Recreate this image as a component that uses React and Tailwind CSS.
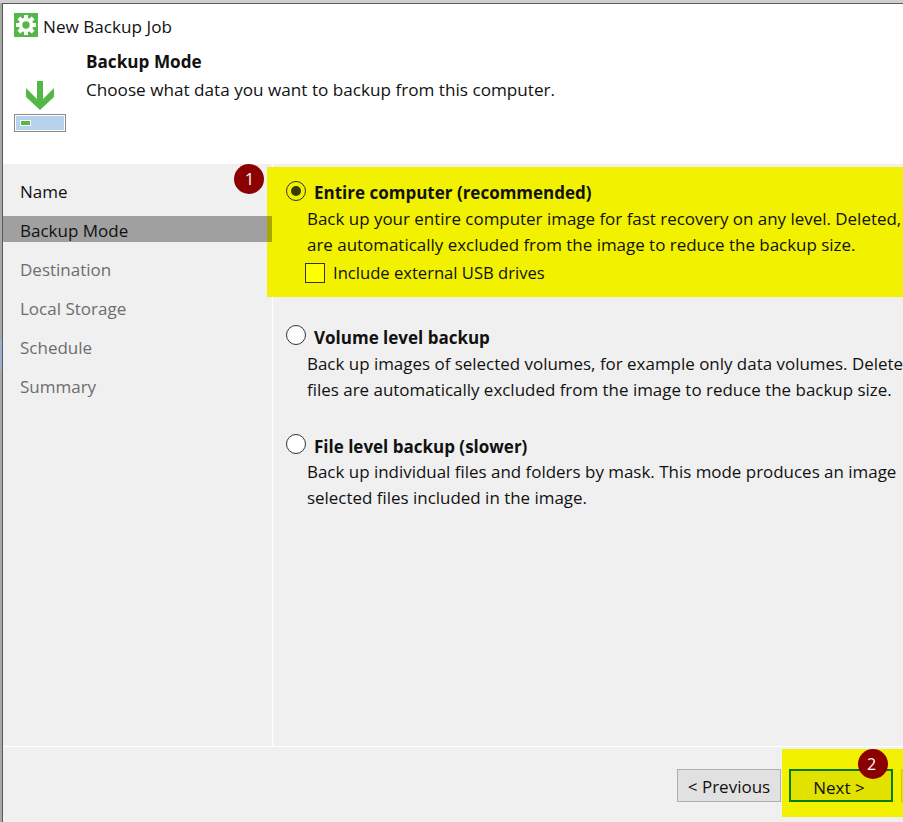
const steps = [
  { label: "Name", color: "text-[#111]" },
  { label: "Backup Mode", color: "text-[#111]", active: true },
  { label: "Destination", color: "text-[#6d6d6d]" },
  { label: "Local Storage", color: "text-[#6d6d6d]" },
  { label: "Schedule", color: "text-[#6d6d6d]" },
  { label: "Summary", color: "text-[#6d6d6d]" },
];

const modes = [
  {
    title: "Volume level backup",
    lines: [
      "Back up images of selected volumes, for example only data volumes. Deleted",
      "files are automatically excluded from the image to reduce the backup size.",
    ],
  },
  {
    title: "File level backup (slower)",
    lines: [
      "Back up individual files and folders by mask. This mode produces an image",
      "selected files included in the image.",
    ],
  },
];

const teeth = [0, 45, 90, 135, 180, 225, 270, 315];

function GearIcon() {
  return (
    <svg width="24" height="24" viewBox="0 0 24 24" className="shrink-0">
      <rect width="24" height="24" fill="#53b848" />
      <circle cx="12" cy="12" r="5.5" fill="none" stroke="#fff" strokeWidth="3.600" />
      {teeth.map((deg) => (
        <rect key={deg} x="10" y="2" width="4" height="4" fill="#fff" transform={`rotate(${deg} 12 12)`} />
      ))}
    </svg>
  );
}

function ModeIcon() {
  return (
    <svg width="52" height="51" viewBox="0 0 52 51" className="shrink-0">
      <path fill="#53b848" d="M23 0h6v18l11-11v9L26 29 12 16V7l11 11z" />
      <rect x="0.500" y="33.500" width="51" height="17" fill="#b9d2ec" stroke="#8a8a8a" />
      <rect x="1.500" y="34.500" width="49" height="15" fill="none" stroke="#fff" />
      <rect x="6.500" y="39.500" width="10" height="5" fill="#53b848" stroke="#fff" />
    </svg>
  );
}

function Radio({ checked }) {
  return (
    <span
      className={`mb-1 flex h-5 w-5 shrink-0 items-center justify-center rounded-full border border-[#333] ${checked ? "" : "bg-white"}`}
    >
      {checked && <span className="h-[10px] w-[10px] rounded-full bg-[#3a3a08]" />}
    </span>
  );
}

export default function App() {
  return (
    <div className="relative flex h-[822px] w-[903px] flex-col overflow-hidden bg-[#cfcfcf] font-['Open_Sans',sans-serif] text-[17px] text-[#111]">
      <div className="h-[3px] shrink-0" />
      <div className="flex h-[819px]">
        {/* window behind the dialog */}
        <div className="w-[2px] shrink-0 bg-[#a8a8a8] pt-[337px]">
          <div className="h-[30px] bg-[#9db0d0]" />
        </div>

        <div className="flex min-w-0 flex-1 flex-col border-l border-t border-[#5a5a5a] bg-[#f0f0f0]">
          {/* header */}
          <div className="h-[160px] shrink-0 bg-white pl-[11px] pt-[9px] text-[17.150px]">
            <div className="flex items-start gap-[5px]">
              <GearIcon />
              <span className="mt-[2px] leading-6">New Backup Job</span>
            </div>
            <div className="mt-[11px] flex gap-5">
              <div className="pt-[31px]">
                <ModeIcon />
              </div>
              <div>
                <div className="font-bold leading-6">Backup Mode</div>
                <div className="mt-[4px] leading-6">Choose what data you want to backup from this computer.</div>
              </div>
            </div>
          </div>

          {/* body */}
          <div className="relative flex h-[582px] shrink-0">
            <div className="absolute left-[264px] top-[3px] h-[130px] w-[636px] bg-[#f2f200]" />
            <div className="relative w-[269px] shrink-0 pt-[13px]">
              {steps.map((step) => (
                <div
                  key={step.label}
                  className={`relative mb-[13px] h-[26px] pl-[17px] leading-[30px] ${step.color} ${step.active ? "bg-[#a0a0a0]" : ""}`}
                >
                  {step.label}
                  {step.active && <span className="absolute bottom-0 right-0 top-0 w-[5px] bg-[#a8a400]" />}
                </div>
              ))}
            </div>
            <div className="w-[1px] bg-white" />
            <div className="relative min-w-0 flex-1 overflow-hidden whitespace-nowrap pl-[13px] pt-[16px]">
              <div className="flex items-center gap-[8px] font-bold">
                <Radio checked />
                <span className="py-[1px] leading-6">Entire computer (recommended)</span>
              </div>
              <div className="ml-[21px] text-[16.950px] leading-[26px]">
                <div>Back up your entire computer image for fast recovery on any level. Deleted,</div>
                <div>are automatically excluded from the image to reduce the backup size.</div>
              </div>
              <div className="ml-[19px] mt-[3px] flex items-center gap-2 text-[16.600px] leading-6">
                <span className="h-5 w-5 shrink-0 border border-[#333] bg-[#ffff00]" />
                <span>Include external USB drives</span>
              </div>
              {modes.map((mode, i) => (
                <div key={mode.title} className={i === 0 ? "mt-[39px]" : "mt-[30px]"}>
                  <div className="flex items-center gap-[8px] font-bold">
                    <Radio />
                    <span className="pt-[2px] leading-6">{mode.title}</span>
                  </div>
                  <div className={`ml-[21px] text-[16.950px] leading-[26px] ${i === 0 ? "mt-[1px]" : ""}`}>
                    {mode.lines.map((line) => (
                      <div key={line}>{line}</div>
                    ))}
                  </div>
                </div>
              ))}
            </div>
          </div>

          {/* footer */}
          <div className="relative flex flex-1 items-start overflow-hidden border-t border-white pl-[674px] pt-[22px]">
            <div className="absolute left-[779px] top-[2px] h-[68px] w-[121px] bg-[#f2f200]" />
            <button className="relative h-[33px] w-[104px] shrink-0 border border-[#adadad] bg-[#e1e1e1] leading-[34px]">&lt; Previous</button>
            <button className="relative ml-[8px] h-[33px] w-[104px] shrink-0 border-2 border-[#0a7a0a] bg-[#e2e200] pr-1 leading-[33px]">Next &gt;</button>
            <div className="relative ml-[8px] h-[33px] w-[104px] shrink-0 border border-[#d0d000] bg-[#e2e200]" />
          </div>
        </div>
      </div>

      {/* step badges */}
      <div className="absolute left-[234px] top-[164px] flex h-[30px] w-[30px] items-center justify-center rounded-full bg-[#8b0000] pl-[1px] text-base text-white">1</div>
      <div className="absolute left-[858px] top-[749px] flex h-[30px] w-[30px] items-center justify-center rounded-full bg-[#8b0000] pb-[1px] pr-[3px] text-base text-white">2</div>
    </div>
  );
}
